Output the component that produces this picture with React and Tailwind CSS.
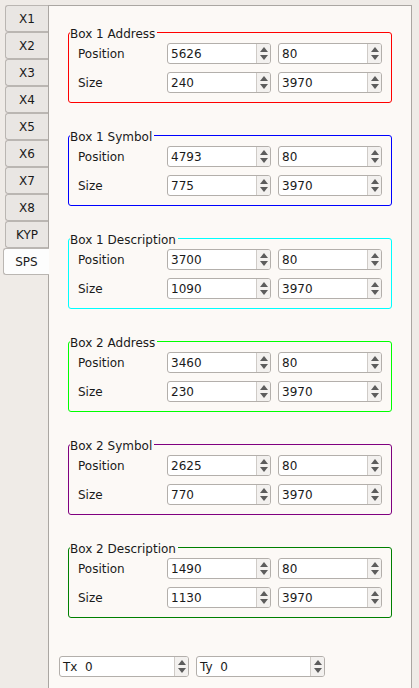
import React from "react";

const FONT = { fontFamily: '"DejaVu Sans", "Liberation Sans", sans-serif' };

function Arrows() {
  return (
    <div className="flex w-[14px] flex-col items-center justify-center gap-[3px] border-l border-[#cfcbc7] bg-[#f3f1ef]">
      <svg width="8" height="5" viewBox="0 0 8 5">
        <path d="M0 5 L4 0 L8 5 Z" fill="#5c5c5c" />
      </svg>
      <svg width="8" height="5" viewBox="0 0 8 5">
        <path d="M0 0 L8 0 L4 5 Z" fill="#5c5c5c" />
      </svg>
    </div>
  );
}

function Spin({ value, w = "w-[104px]" }) {
  return (
    <div className={`flex h-[21px] ${w} overflow-hidden rounded-[3px] border border-[#b3afab] bg-white`}>
      <div className="flex flex-1 items-center pl-[3px] text-[12px] text-[#1a1a1a] whitespace-pre">{value}</div>
      <Arrows />
    </div>
  );
}

function Group({ title, color, pos, size }) {
  return (
    <div
      className="relative h-[71px] w-[324px] rounded-[3px] border pl-[9px] pt-[10px]"
      style={{ borderColor: color }}
    >
      <div className="absolute left-[1px] top-[-6px] bg-[#fcf9f6] pr-[2px] text-[12px] leading-[14px] text-[#1a1a1a]">
        {title}
      </div>
      <div className="flex flex-col gap-[8px]">
        <div className="flex items-center">
          <div className="w-[89px] text-[12px] text-[#1a1a1a]">Position</div>
          <Spin value={pos[0]} />
          <div className="w-[7px]" />
          <Spin value={pos[1]} />
        </div>
        <div className="flex items-center">
          <div className="w-[89px] text-[12px] text-[#1a1a1a]">Size</div>
          <Spin value={size[0]} />
          <div className="w-[7px]" />
          <Spin value={size[1]} />
        </div>
      </div>
    </div>
  );
}

const tabs = ["X1", "X2", "X3", "X4", "X5", "X6", "X7", "X8", "KYP"];

const groups = [
  { title: "Box 1 Address", color: "#ff0000", pos: ["5626", "80"], size: ["240", "3970"] },
  { title: "Box 1 Symbol", color: "#0000ff", pos: ["4793", "80"], size: ["775", "3970"] },
  { title: "Box 1 Description", color: "#00ffff", pos: ["3700", "80"], size: ["1090", "3970"] },
  { title: "Box 2 Address", color: "#00ff00", pos: ["3460", "80"], size: ["230", "3970"] },
  { title: "Box 2 Symbol", color: "#800080", pos: ["2625", "80"], size: ["770", "3970"] },
  { title: "Box 2 Description", color: "#008000", pos: ["1490", "80"], size: ["1130", "3970"] },
];

export default function App() {
  return (
    <div className="h-[688px] w-[419px] overflow-hidden bg-[#efebe7] pt-[5px]" style={FONT}>
      <div className="flex">
        <div className="relative z-10 flex w-[48px] flex-col items-end">
          {tabs.map((t) => (
            <div
              key={t}
              className="flex h-[27px] w-[43px] items-center justify-center rounded-l-[3px] border border-r-0 border-[#bab6b2] bg-[#e9e6e3] text-[12px] text-[#1a1a1a]"
            >
              {t}
            </div>
          ))}
          <div className="mr-[-1px] flex h-[27px] w-[46px] items-center justify-center rounded-l-[3px] border border-r-0 border-[#bab6b2] bg-[#fdfdfd] text-[12px] text-[#1a1a1a]">
            SPS
          </div>
        </div>
        <div className="h-[700px] w-[364px] border border-[#aaa6a2] bg-[#fcf9f6]">
          <div className="flex flex-col gap-[32px] pl-[19px] pt-[26px]">
            {groups.map((g) => (
              <Group key={g.title} {...g} />
            ))}
          </div>
          <div className="flex gap-[7px] pl-[10px] pt-[38px]">
            <Spin value="Tx  0" w="w-[130px]" />
            <Spin value="Ty  0" w="w-[129px]" />
          </div>
        </div>
      </div>
    </div>
  );
}
